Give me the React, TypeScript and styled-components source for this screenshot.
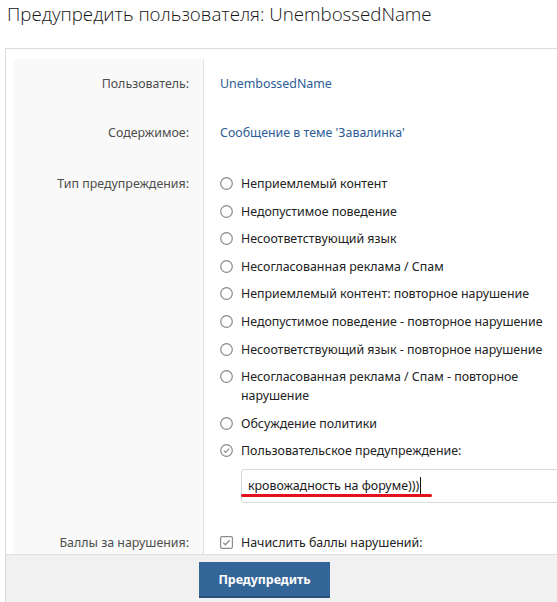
import React from 'react';
import styled, { createGlobalStyle } from 'styled-components';

const Global = createGlobalStyle`
  html, body {
    margin: 0;
    padding: 0;
    overflow: hidden;
    background: #fff;
    font-family: "Noto Sans", "Open Sans", sans-serif;
  }
`

const Page = styled.div`
  padding: 0 0 0 5px;
  width: 640px;
`
const Title = styled.h1`
  margin: 0;
  padding: 2px 0 0 2px;
  height: 46px;
  font-family: "Open Sans", sans-serif;
  font-weight: 300;
  font-size: 18.7px;
  line-height: 24px;
  color: #141414;
`
const Box = styled.div`
  border: 1px solid #dcdcdc;
  border-bottom: none;
`
const FormBody = styled.div`
  height: 495px;
  padding: 10px 8px 0;
  overflow: hidden;
`
const Row = styled.div`
  display: grid;
  grid-template-columns: 190px 1fr;
`
const Label = styled.div<{ top?: number }>`
  background: #f9f9f9;
  border-right: 1px solid #e2e2e2;
  padding: ${p => (p.top ?? 15)}px 14px 15px 0;
  text-align: right;
  font-size: 12.4px;
  line-height: 19px;
  color: #4d4d4d;
`
const Value = styled.div<{ top?: number }>`
  padding: ${p => (p.top ?? 15)}px 0 15px 16px;
  font-size: 12.4px;
  line-height: 19px;
  color: #222;
`
const Link = styled.a`
  color: #2c5d96;
  text-decoration: none;
`
const Choices = styled.ul`
  list-style: none;
  margin: 0;
  padding: 0;
  display: flex;
  flex-direction: column;
  gap: 8.6px;
`
const Choice = styled.li`
  display: flex;
  align-items: flex-start;
  gap: 8px;
`
const ChoiceText = styled.span`
  max-width: 310px;
`
const Mark = styled.span`
  flex: none;
  width: 13px;
  height: 19px;
  display: flex;
  align-items: center;
`
const Extra = styled.div`
  position: relative;
  margin: 8.6px 0 0 21px;
`
const TextInput = styled.div`
  height: 32px;
  border: 1px solid #dadada;
  border-radius: 3px 0 0 3px;
  padding: 0 6px;
  display: flex;
  align-items: center;
  font-size: 12.4px;
  color: #1a1a1a;
`
const Caret = styled.span`
  display: inline-block;
  width: 1px;
  height: 17px;
  background: #111;
  margin-left: 1px;
`
const Scribble = styled.span`
  position: absolute;
  left: 0;
  top: 25px;
  width: 191px;
  height: 3px;
  border-radius: 2px;
  background: #e3111d;
`
const Footer = styled.div`
  background: #f1f1f1;
  border-top: 1px solid #dedede;
  padding: 7px 0 0 193px;
  height: 40px;
`
const Button = styled.button`
  width: 131px;
  height: 36px;
  background: #336598;
  border: none;
  border-bottom: 2px solid #284f78;
  color: #fff;
  font-family: "Noto Sans", "Open Sans", sans-serif;
  font-weight: 700;
  font-size: 12.4px;
  padding: 0;
`

const Radio = ({ checked }: { checked?: boolean }) => (
  <svg width="13" height="13" viewBox="0 0 13 13">
    <circle cx="6.5" cy="6.5" r="5.8" fill="none" stroke="#8a8a8a" strokeWidth="1.2" />
    {checked && <path d="M3.8 6.7l1.8 1.8 3.6-3.8" fill="none" stroke="#8a8a8a" strokeWidth="1.2" />}
  </svg>
)

const CheckBox = () => (
  <svg width="13" height="13" viewBox="0 0 13 13">
    <rect x="0.6" y="0.6" width="11.8" height="11.8" rx="1.5" fill="none" stroke="#8a8a8a" strokeWidth="1.2" />
    <path d="M3.3 6.6l2.1 2.1 4.2-4.5" fill="none" stroke="#8a8a8a" strokeWidth="1.3" />
  </svg>
)

const options = [
  'Неприемлемый контент',
  'Недопустимое поведение',
  'Несоответствующий язык',
  'Несогласованная реклама / Спам',
  'Неприемлемый контент: повторное нарушение',
  'Недопустимое поведение - повторное нарушение',
  'Несоответствующий язык - повторное нарушение',
  'Несогласованная реклама / Спам - повторное нарушение',
  'Обсуждение политики',
]

export default function App() {
  return (
    <Page>
      <Global />
      <Title>Предупредить пользователя: UnembossedName</Title>
      <Box>
        <FormBody>
          <Row>
            <Label>Пользователь:</Label>
            <Value><Link href="#">UnembossedName</Link></Value>
          </Row>
          <Row>
            <Label>Содержимое:</Label>
            <Value><Link href="#">Сообщение в теме 'Завалинка'</Link></Value>
          </Row>
          <Row>
            <Label top={17}>Тип предупреждения:</Label>
            <Value top={17}>
              <Choices>
                {options.map(o => (
                  <Choice key={o}>
                    <Mark><Radio /></Mark>
                    <ChoiceText>{o}</ChoiceText>
                  </Choice>
                ))}
                <Choice>
                  <Mark><Radio checked /></Mark>
                  <ChoiceText>Пользовательское предупреждение:</ChoiceText>
                </Choice>
              </Choices>
              <Extra>
                <TextInput>кровожадность на форуме)))<Caret /></TextInput>
                <Scribble />
              </Extra>
            </Value>
          </Row>
          <Row>
            <Label>Баллы за нарушения:</Label>
            <Value>
              <Choice>
                <Mark><CheckBox /></Mark>
                <ChoiceText>Начислить баллы нарушений:</ChoiceText>
              </Choice>
            </Value>
          </Row>
        </FormBody>
        <Footer>
          <Button>Предупредить</Button>
        </Footer>
      </Box>
    </Page>
  )
}
